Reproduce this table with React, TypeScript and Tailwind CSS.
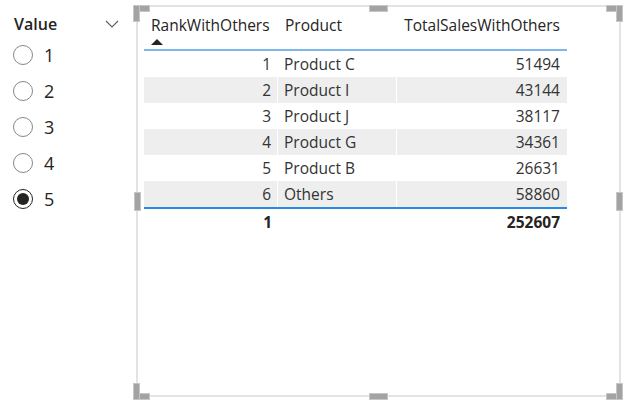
import React from "react";

const rows = [
  { r: 1, p: "Product C", v: "51494" },
  { r: 2, p: "Product I", v: "43144" },
  { r: 3, p: "Product J", v: "38117" },
  { r: 4, p: "Product G", v: "34361" },
  { r: 5, p: "Product B", v: "26631" },
  { r: 6, p: "Others", v: "58860" },
];

function Radio({ label, checked }: { label: string; checked?: boolean }) {
  return (
    <div className="flex h-[36px] items-center">
      <div className="ml-[13px] flex h-[20px] w-[20px] items-center justify-center">
        {checked ? (
          <div className="flex h-[20px] w-[20px] items-center justify-center rounded-full border-[1.5px] border-[#252423] bg-white">
            <div className="h-[12px] w-[12px] rounded-full bg-[#252423]" />
          </div>
        ) : (
          <div className="h-[20px] w-[20px] rounded-full border border-[#8a8886] bg-white" />
        )}
      </div>
      <span className="ml-[11px] text-[18px] leading-[24px] text-[#252423]">{label}</span>
    </div>
  );
}

function Handle({ className }: { className: string }) {
  return <div className={`absolute border border-[#c6c6c6] bg-[#a3a3a3] ${className}`} />;
}

export default function App() {
  return (
    <div
      className="flex h-[402px] w-[637px] bg-white"
      style={{ fontFamily: '"Open Sans", "Noto Sans", sans-serif' }}
    >
      <div className="w-[136px] shrink-0">
        <div className="flex h-[37px] items-start pt-[12px]">
          <span className="ml-[14px] text-[16px] font-semibold leading-[24px] text-[#252423]">Value</span>
          <svg className="ml-[48px] mt-[8px]" width="14" height="8" viewBox="0 0 14 8">
            <path d="M1 1 L7 7 L13 1" fill="none" stroke="#605e5c" strokeWidth="1.1" />
          </svg>
        </div>
        <Radio label="1" />
        <Radio label="2" />
        <Radio label="3" />
        <Radio label="4" />
        <Radio label="5" checked />
      </div>

      <div className="relative mt-[5px] h-[392px] w-[485px] border-2 border-[#e3e3e3]">
        <div className="pl-[6px] pt-0">
          <div className="w-[423px] text-[15.5px] text-[#252423]">
            <div className="flex h-[44px] border-b-2 border-[#7db6ec]">
              <div className="w-[134px] pl-[7px] pt-[8px]">
                <div className="leading-[20px]">RankWithOthers</div>
                <svg className="mt-[4px]" width="12" height="6" viewBox="0 0 12 6">
                  <path d="M6 0 L12 6 L0 6 Z" fill="#252423" />
                </svg>
              </div>
              <div className="w-[119px] pl-[7px] pt-[8px] leading-[20px]">Product</div>
              <div className="flex-1 pr-[7px] pt-[8px] text-right leading-[20px]">TotalSalesWithOthers</div>
            </div>
            {rows.map((row, i) => (
              <div
                key={row.r}
                className={`flex h-[26px] items-center leading-[26px] text-[#333333] ${i % 2 === 1 ? "bg-[#eeeeee]" : "bg-white"}`}
              >
                <div className="w-[134px] border-r border-white pr-[6px] text-right">{row.r}</div>
                <div className="w-[119px] border-r border-white pl-[6px]">{row.p}</div>
                <div className="flex-1 pr-[7px] text-right">{row.v}</div>
              </div>
            ))}
            <div className="flex h-[28px] items-center border-t-2 border-[#2a8ae0] font-bold leading-[26px]">
              <div className="w-[134px] pr-[6px] text-right">1</div>
              <div className="w-[119px]" />
              <div className="flex-1 pr-[7px] text-right">252607</div>
            </div>
          </div>
        </div>

        <Handle className="left-[-5px] top-[-2px] h-[7px] w-[17px]" />
        <Handle className="left-[-5px] top-[-2px] h-[17px] w-[7px]" />
        <Handle className="right-[-4px] top-[-2px] h-[7px] w-[17px]" />
        <Handle className="right-[-4px] top-[-2px] h-[17px] w-[7px]" />
        <Handle className="bottom-[-5px] left-[-5px] h-[7px] w-[17px]" />
        <Handle className="bottom-[-5px] left-[-5px] h-[17px] w-[7px]" />
        <Handle className="bottom-[-5px] right-[-4px] h-[7px] w-[17px]" />
        <Handle className="bottom-[-5px] right-[-4px] h-[17px] w-[7px]" />
        <Handle className="left-[231px] top-[-2px] h-[7px] w-[19px]" />
        <Handle className="bottom-[-5px] left-[231px] h-[7px] w-[19px]" />
        <Handle className="left-[-4px] top-[185px] h-[19px] w-[7px]" />
        <Handle className="right-[-4px] top-[185px] h-[19px] w-[7px]" />
      </div>
    </div>
  );
}
